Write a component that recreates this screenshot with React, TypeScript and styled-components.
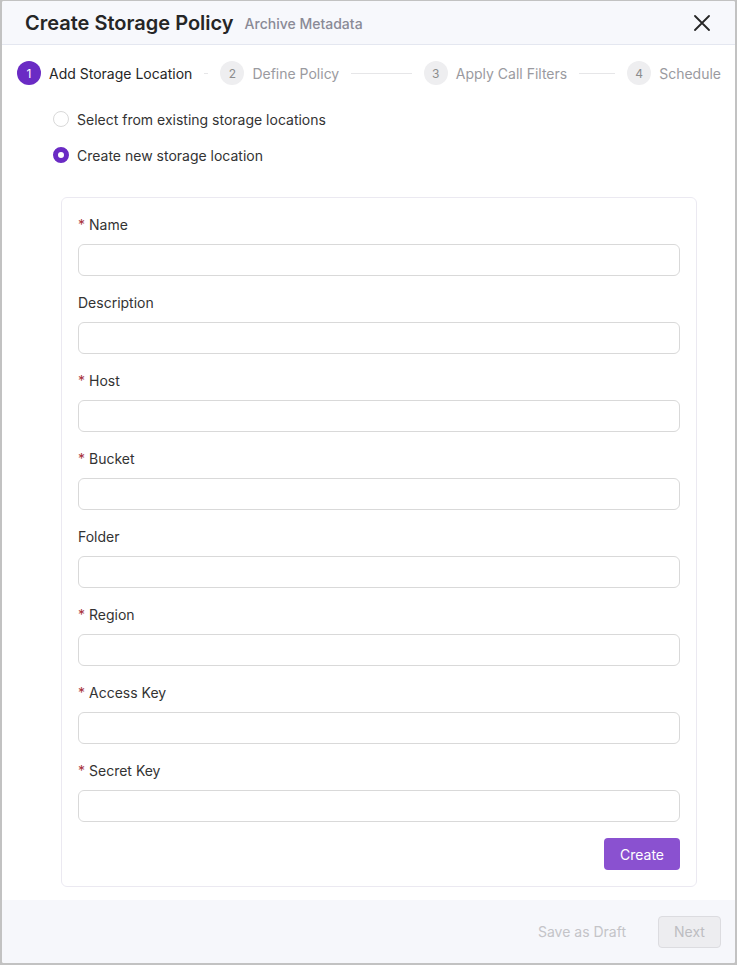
import React from "react";
import styled, { createGlobalStyle } from "styled-components";

const Global = createGlobalStyle`
  * { box-sizing: border-box; }
  html, body { margin: 0; padding: 0; }
  body {
    background: #c2c2c2;
    font-family: Inter, "Noto Sans", Arial, sans-serif;
    color: #262626;
    -webkit-font-smoothing: antialiased;
  }
`;

const Modal = styled.div`
  margin: 1px 2px 2px 2px;
  height: 962px;
  background: #ffffff;
  border-radius: 2px;
  display: flex;
  flex-direction: column;
  overflow: hidden;
`;

const Header = styled.header`
  height: 44px;
  flex: none;
  background: #f7f8fc;
  border-bottom: 1px solid #e4e7f0;
  display: flex;
  align-items: center;
  padding: 0 21px 0 23px;
`;

const Title = styled.h1`
  margin: 0;
  font-size: 20px;
  font-weight: 600;
  color: #262626;
`;

const Subtitle = styled.span`
  margin-left: 11px;
  font-size: 14px;
  font-weight: 500;
  color: #8a8a96;
  padding-top: 2px;
`;

const CloseButton = styled.button`
  margin-left: auto;
  width: 24px;
  height: 24px;
  padding: 0;
  border: none;
  background: transparent;
  display: flex;
  align-items: center;
  justify-content: center;
  cursor: pointer;
  color: #262626;
`;

const Body = styled.main`
  flex: 1;
  padding: 16px 14px 0 15px;
  display: flex;
  flex-direction: column;
`;

const Steps = styled.div`
  display: flex;
  align-items: center;
  gap: 12px;
  height: 24px;
`;

const Step = styled.div<{ $last?: boolean }>`
  display: flex;
  align-items: center;
  flex: ${(p) => (p.$last ? "none" : "1 1 0")};
  min-width: 0;
  overflow: hidden;
`;

const StepIcon = styled.span<{ $active?: boolean }>`
  width: 24px;
  height: 24px;
  flex: none;
  border-radius: 50%;
  display: flex;
  align-items: center;
  justify-content: center;
  font-size: 12px;
  padding-top: 1px;
  background: ${(p) => (p.$active ? "#6a2bc4" : "#eeeef0")};
  color: ${(p) => (p.$active ? "#ffffff" : "#8c8c8c")};
`;

const StepLabel = styled.span<{ $active?: boolean }>`
  margin-left: 8px;
  font-size: 14px;
  white-space: nowrap;
  color: ${(p) => (p.$active ? "#262626" : "#9a9aa0")};
`;

const StepTail = styled.span`
  flex: 1;
  min-width: 0;
  height: 1px;
  margin-left: 12px;
  background: #e6e6e8;
`;

const RadioGroup = styled.div`
  display: flex;
  flex-direction: column;
  gap: 14px;
  margin: 23px 0 0 36px;
`;

const RadioRow = styled.label`
  display: flex;
  align-items: center;
  height: 22px;
  font-size: 14px;
  color: #333333;
  cursor: pointer;
`;

const RadioDot = styled.span<{ $checked?: boolean }>`
  width: 16px;
  height: 16px;
  flex: none;
  border-radius: 50%;
  margin-right: 8px;
  background: #ffffff;
  border: ${(p) => (p.$checked ? "5px solid #6a2bc4" : "1px solid #d9d9d9")};
`;

const Card = styled.section`
  margin: 31px 24px 0 44px;
  border: 1px solid #ebe9f1;
  border-radius: 6px;
  padding: 16px;
  display: flex;
  flex-direction: column;
`;

const Field = styled.div`
  display: flex;
  flex-direction: column;
  margin-bottom: 16px;
`;

const Label = styled.label`
  height: 22px;
  line-height: 22px;
  margin-bottom: 8px;
  font-size: 14px;
  color: #333333;
  display: flex;
  align-items: center;
`;

const Required = styled.span`
  color: #a8323a;
  margin-right: 4px;
  font-size: 14px;
`;

const Input = styled.input`
  height: 32px;
  width: 100%;
  border: 1px solid #d9d9d9;
  border-radius: 6px;
  padding: 4px 11px;
  font-size: 14px;
  font-family: inherit;
  outline: none;
  background: #ffffff;
`;

const Actions = styled.div`
  display: flex;
  justify-content: flex-end;
`;

const PrimaryButton = styled.button`
  height: 32px;
  padding: 0 16px;
  border: none;
  border-radius: 4px;
  background: #8a51d0;
  color: #ffffff;
  font-size: 14px;
  font-family: inherit;
  cursor: pointer;
`;

const Footer = styled.footer`
  height: 63px;
  flex: none;
  background: #f6f7fb;
  display: flex;
  align-items: center;
  justify-content: flex-end;
  padding: 0 14px 0 16px;
  gap: 16px;
`;

const TextButton = styled.button`
  height: 32px;
  padding: 0 16px;
  border: none;
  background: transparent;
  color: #c4c4c8;
  font-size: 14px;
  font-family: inherit;
  cursor: not-allowed;
`;

const DisabledButton = styled.button`
  width: 63px;
  height: 32px;
  border: 1px solid #dcdce0;
  border-radius: 4px;
  background: #ededf0;
  color: #bdbdc2;
  font-size: 14px;
  font-family: inherit;
  cursor: not-allowed;
`;

const steps = ["Add Storage Location", "Define Policy", "Apply Call Filters", "Schedule"];

const fields: { label: string; required: boolean }[] = [
  { label: "Name", required: true },
  { label: "Description", required: false },
  { label: "Host", required: true },
  { label: "Bucket", required: true },
  { label: "Folder", required: false },
  { label: "Region", required: true },
  { label: "Access Key", required: true },
  { label: "Secret Key", required: true },
];

export default function App() {
  return (
    <>
      <Global />
      <Modal>
        <Header>
          <Title>Create Storage Policy</Title>
          <Subtitle>Archive Metadata</Subtitle>
          <CloseButton aria-label="Close">
            <svg width="16" height="16" viewBox="0 0 16 16">
              <path d="M1 1L15 15M15 1L1 15" stroke="currentColor" strokeWidth="1.8" strokeLinecap="round" />
            </svg>
          </CloseButton>
        </Header>
        <Body>
          <Steps>
            {steps.map((s, i) => {
              const last = i === steps.length - 1;
              return (
                <Step key={s} $last={last}>
                  <StepIcon $active={i === 0}>{i + 1}</StepIcon>
                  <StepLabel $active={i === 0}>{s}</StepLabel>
                  {!last && <StepTail />}
                </Step>
              );
            })}
          </Steps>
          <RadioGroup>
            <RadioRow>
              <RadioDot />
              Select from existing storage locations
            </RadioRow>
            <RadioRow>
              <RadioDot $checked />
              Create new storage location
            </RadioRow>
          </RadioGroup>
          <Card>
            {fields.map((f) => (
              <Field key={f.label}>
                <Label>
                  {f.required && <Required>*</Required>}
                  {f.label}
                </Label>
                <Input />
              </Field>
            ))}
            <Actions>
              <PrimaryButton>Create</PrimaryButton>
            </Actions>
          </Card>
        </Body>
        <Footer>
          <TextButton>Save as Draft</TextButton>
          <DisabledButton>Next</DisabledButton>
        </Footer>
      </Modal>
    </>
  );
}
